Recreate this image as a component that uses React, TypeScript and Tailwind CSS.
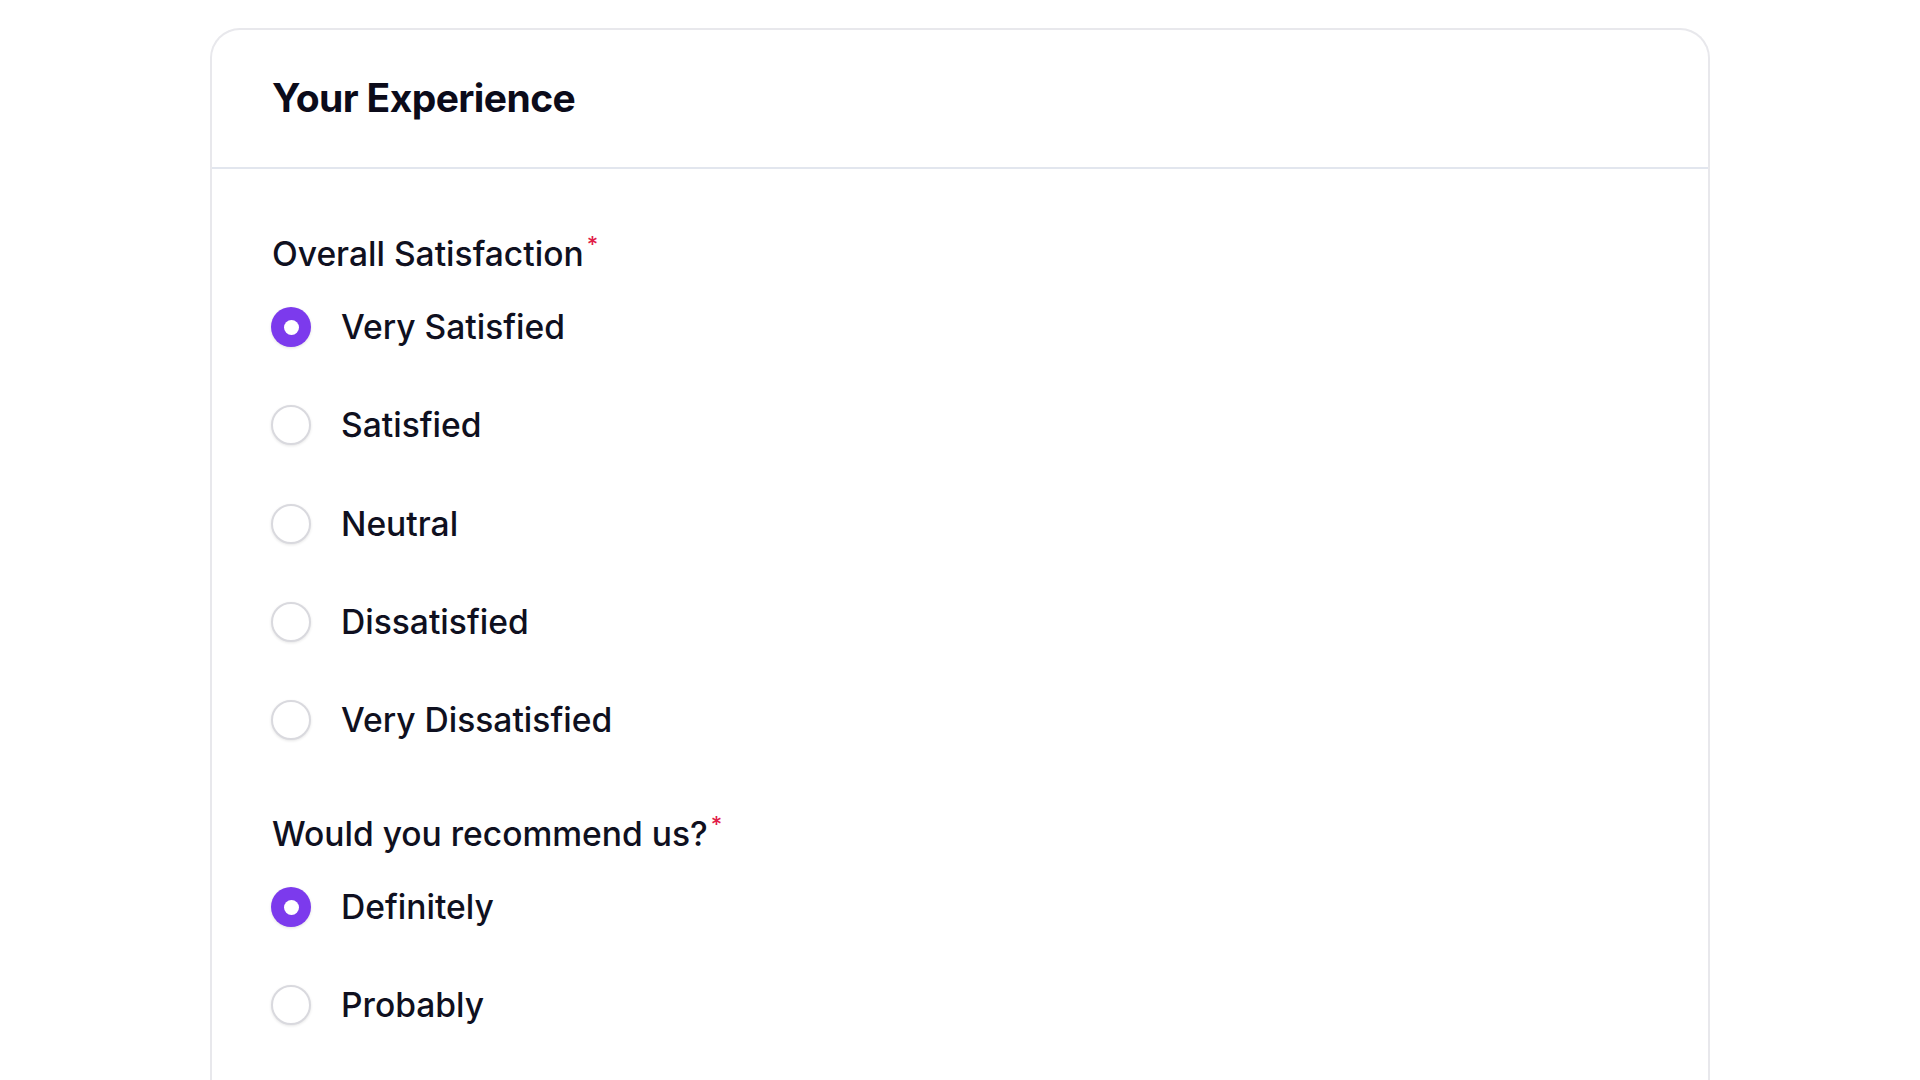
import React from "react";

type Opt = { label: string; selected?: boolean };

function Radio({ selected }: { selected?: boolean }) {
  if (selected) {
    return (
      <span className="flex h-[40px] w-[40px] shrink-0 items-center justify-center rounded-full bg-[#7c3aed] shadow-[0_1px_3px_rgba(0,0,0,0.12)]">
        <span className="h-[15px] w-[15px] rounded-full bg-white" />
      </span>
    );
  }
  return (
    <span className="h-[40px] w-[40px] shrink-0 rounded-full border-2 border-[#d9d9de] bg-white shadow-[0_1px_3px_rgba(0,0,0,0.10)]" />
  );
}

function Group({ title, options, className }: { title: string; options: Opt[]; className?: string }) {
  return (
    <div className={className}>
      <div className="h-[48px] text-[33.6px] leading-[48px] font-medium text-[#0f1020]">
        {title}
        <span className="relative top-[-14px] ml-[3px] text-[22px] text-[#e11d48]">*</span>
      </div>
      <div className="mt-[29px] flex flex-col gap-[58.3px]">
        {options.map((o) => (
          <label key={o.label} className="-ml-[1px] flex h-[40px] items-center gap-[30px]">
            <Radio selected={o.selected} />
            <span className="text-[33.6px] leading-[40px] font-medium text-[#0f1020]">{o.label}</span>
          </label>
        ))}
      </div>
    </div>
  );
}

export default function App() {
  return (
    <div className="h-screen overflow-hidden bg-white pt-[28px] font-['Inter','Liberation_Sans',sans-serif]">
      <div className="mx-auto w-[1500px] rounded-t-[30px] border-2 border-b-0 border-[#e8e8ec] bg-white">
        <div className="flex h-[139px] items-center border-b-2 border-[#e2e6ee] px-[60px]">
          <h1 className="text-[39px] font-bold tracking-[-0.6px] text-[#0b0b1a]">Your Experience</h1>
        </div>
        <div className="px-[60px] pt-[61px] pb-[80px]">
          <Group
            title="Overall Satisfaction"
            options={[
              { label: "Very Satisfied", selected: true },
              { label: "Satisfied" },
              { label: "Neutral" },
              { label: "Dissatisfied" },
              { label: "Very Dissatisfied" },
            ]}
          />
          <Group
            className="mt-[70px]"
            title="Would you recommend us?"
            options={[
              { label: "Definitely", selected: true },
              { label: "Probably" },
            ]}
          />
        </div>
      </div>
    </div>
  );
}
